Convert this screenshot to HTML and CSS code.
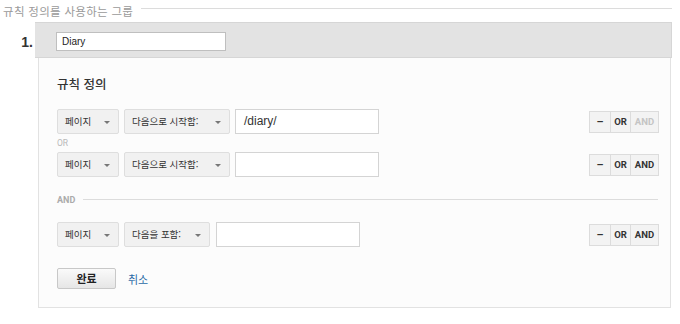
FILE: index.html
```html
<!DOCTYPE html>
<html lang="ko">
<head>
<meta charset="utf-8">
<link rel="stylesheet" href="styles.css">
</head>
<body>
<div class="page">
  <div class="legend"><span class="legend-text">규칙 정의를 사용하는 그룹</span><div class="legend-line"></div></div>
  <div class="group">
    <div class="num">1.</div>
    <div class="card">
      <div class="card-head"><div class="name-input">Diary</div></div>
      <div class="card-body">
        <div class="title">규칙 정의</div>

        <div class="row r1">
          <div class="fields">
            <div class="sel w62">페이지<span class="caret"></span></div>
            <div class="sel w106">다음으로 시작함:<span class="caret"></span></div>
            <div class="txt">/diary/</div>
          </div>
          <div class="ops"><div class="op">–</div><div class="op">OR</div><div class="op dis">AND</div></div>
        </div>
        <div class="or-label">OR</div>
        <div class="row">
          <div class="fields">
            <div class="sel w62">페이지<span class="caret"></span></div>
            <div class="sel w106">다음으로 시작함:<span class="caret"></span></div>
            <div class="txt"></div>
          </div>
          <div class="ops"><div class="op">–</div><div class="op">OR</div><div class="op">AND</div></div>
        </div>

        <div class="and-sep"><span class="and-label">AND</span><div class="and-line"></div></div>

        <div class="row">
          <div class="fields">
            <div class="sel w62">페이지<span class="caret"></span></div>
            <div class="sel w86">다음을 포함:<span class="caret"></span></div>
            <div class="txt"></div>
          </div>
          <div class="ops"><div class="op">–</div><div class="op">OR</div><div class="op">AND</div></div>
        </div>

        <div class="actions">
          <div class="btn">완료</div>
          <div class="link">취소</div>
        </div>
      </div>
    </div>
  </div>
</div>
</body>
</html>
```
FILE: styles.css
```css
* { box-sizing: border-box; }
body {
  margin: 0;
  background: #fff;
  font-family: "Noto Sans CJK KR", "Noto Sans", sans-serif;
  color: #333;
}
.page { padding: 0 8px 0 3px; width: 680px; }
.legend { display: flex; align-items: center; height: 20px; margin-top: 1px; }
.legend-text { font-size: 11.5px; color: #9a9a9a; line-height: 14px; margin-top: -1px; letter-spacing: 0.3px; }
.legend-line { flex: 1; height: 1px; background: #dcdcdc; margin-left: 8px; margin-top: -6px; }
.group { display: flex; margin-top: 1px; }
.num {
  width: 32px; padding-right: 2px; text-align: right;
  font-family: "Liberation Sans", Arial, sans-serif; font-weight: bold; font-size: 14px; color: #333;
  padding-top: 12px;
}
.card { flex: 1; }
.card-head {
  height: 36px; background: #e3e3e3; border: 1px solid #d6d6d6; border-left: none;
  padding: 9px 0 0 21px;
}
.name-input {
  width: 170px; height: 19px; background: #fff; border: 1px solid #bfbfbf;
  font-family: "Liberation Sans", Arial, sans-serif; font-size: 10px; color: #222;
  padding: 2px 0 0 5px; line-height: 14px;
}
.card-body {
  margin: 0 1px 0 3px; background: #fcfcfc; border: 1px solid #e2e2e2; border-top: none;
  height: 250px; padding: 0 11px 0 18px;
}
.title { font-size: 12.5px; color: #333; padding-top: 17px; height: 51px; line-height: 17px; font-weight: 500; }
.row { display: flex; justify-content: space-between; align-items: center; height: 25px; }
.fields { display: flex; gap: 5px; }
.sel {
  height: 25px; background: #f1f1f1; border: 1px solid #dedede; border-radius: 2px;
  font-size: 9.5px; color: #333; padding: 0 0 0 7px; line-height: 23px; position: relative;
}
.w62 { width: 62px; }
.w106 { width: 106px; }
.w86 { width: 86px; margin-right: 1px; }
.caret {
  position: absolute; right: 8px; top: 11px; width: 0; height: 0;
  border-left: 3.5px solid transparent; border-right: 3.5px solid transparent; border-top: 3.5px solid #777;
}
.txt {
  width: 144px; height: 25px; background: #fff; border: 1px solid #d4d4d4;
  font-family: "Liberation Sans", Arial, sans-serif; font-size: 12px; color: #333;
  padding-left: 8px; line-height: 23px;
}
.ops { display: flex; height: 22px; }
.op {
  height: 22px; background: #f3f3f3; border: 1px solid #dcdcdc; margin-left: -1px;
  font-family: "Roboto", "Liberation Sans", sans-serif; font-weight: bold; font-size: 9.5px; color: #333;
  line-height: 20px; text-align: center;
}
.op:nth-child(1) { width: 22px; font-size: 11px; }
.op:nth-child(2) { width: 21px; }
.op:nth-child(3) { width: 29px; }
.op.dis { color: #c4c4c4; }
.or-label {
  height: 18px; font-family: "Roboto", "Liberation Sans", sans-serif; font-size: 8.5px; color: #b8b8b8;
  line-height: 18px;
}
.and-sep { display: flex; align-items: center; height: 45px; }
.and-label { font-family: "Roboto", "Liberation Sans", sans-serif; font-weight: bold; font-size: 9px; color: #ababab; }
.and-line { flex: 1; height: 1px; background: #dcdcdc; margin: 0 1px 0 8px; }
.actions { display: flex; align-items: center; margin-top: 21px; gap: 12px; }
.btn {
  width: 59px; height: 21px; border: 1px solid #c8c8c8; border-radius: 2px;
  background: linear-gradient(#fafafa, #e6e6e6);
  font-size: 11px; font-weight: bold; color: #222; text-align: center; line-height: 19px;
}
.link { font-size: 11px; color: #2a6aa6; }
```
